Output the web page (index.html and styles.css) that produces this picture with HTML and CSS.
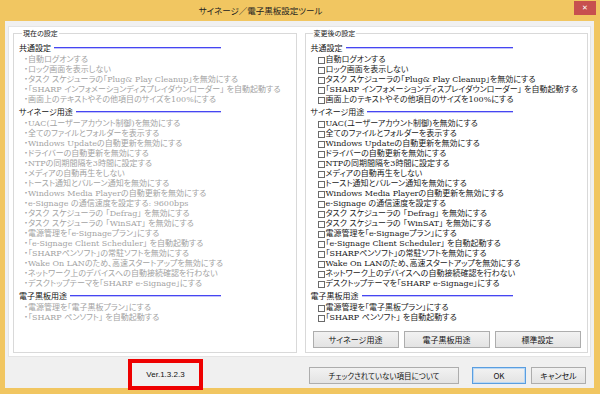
FILE: index.html
```html
<!DOCTYPE html>
<html lang="ja">
<head>
<meta charset="utf-8">
<title>サイネージ／電子黒板設定ツール</title>
<link rel="stylesheet" href="styles.css">
</head>
<body>
<div class="window">
  <div class="titlebar">
    <div class="title">サイネージ／電子黒板設定ツール</div>
    <div class="close">✕</div>
  </div>
  <div class="client">
    <div class="panel">
      <fieldset class="group current">
        <legend>現在の設定</legend>
        <div class="sec"><span>共通設定</span><i></i></div>
        <ul class="items">
          <li>・自動ログオンする</li>
          <li>・ロック画面を表示しない</li>
          <li>・タスク スケジューラの「Plug&amp; Play Cleanup」を無効にする</li>
          <li>・「SHARP インフォメーションディスプレイダウンローダー」 を自動起動する</li>
          <li>・画面上のテキストやその他項目のサイズを100%にする</li>
        </ul>
        <div class="sec"><span>サイネージ用途</span><i></i></div>
        <ul class="items">
          <li>・UAC(ユーザーアカウント制御)を無効にする</li>
          <li>・全てのファイルとフォルダーを表示する</li>
          <li>・Windows Updateの自動更新を無効にする</li>
          <li>・ドライバーの自動更新を無効にする</li>
          <li>・NTPの同期間隔を3時間に設定する</li>
          <li>・メディアの自動再生をしない</li>
          <li>・トースト通知とバルーン通知を無効にする</li>
          <li>・Windows Media Playerの自動更新を無効にする</li>
          <li>・e-Signage の通信速度を設定する: 9600bps</li>
          <li>・タスク スケジューラの 「Defrag」 を無効にする</li>
          <li>・タスク スケジューラの 「WinSAT」 を無効にする</li>
          <li>・電源管理を「e-Signageプラン」にする</li>
          <li>・「e-Signage Client Scheduler」 を自動起動する</li>
          <li>・「SHARPペンソフト」の常駐ソフトを無効にする</li>
          <li>・Wake On LANのため、高速スタートアップを無効にする</li>
          <li>・ネットワーク上のデバイスへの自動接続確認を行わない</li>
          <li>・デスクトップテーマを「SHARP e-Signage」にする</li>
        </ul>
        <div class="sec"><span>電子黒板用途</span><i></i></div>
        <ul class="items">
          <li>・電源管理を「電子黒板プラン」にする</li>
          <li>・「SHARP ペンソフト」 を自動起動する</li>
        </ul>
      </fieldset>
      <fieldset class="group after">
        <legend>変更後の設定</legend>
        <div class="sec"><span>共通設定</span><i></i></div>
        <ul class="items">
          <li><b></b>自動ログオンする</li>
          <li><b></b>ロック画面を表示しない</li>
          <li><b></b>タスク スケジューラの「Plug&amp; Play Cleanup」を無効にする</li>
          <li><b></b>「SHARP インフォメーションディスプレイダウンローダー」 を自動起動する</li>
          <li><b></b>画面上のテキストやその他項目のサイズを100%にする</li>
        </ul>
        <div class="sec"><span>サイネージ用途</span><i></i></div>
        <ul class="items">
          <li><b></b>UAC(ユーザーアカウント制御)を無効にする</li>
          <li><b></b>全てのファイルとフォルダーを表示する</li>
          <li><b></b>Windows Updateの自動更新を無効にする</li>
          <li><b></b>ドライバーの自動更新を無効にする</li>
          <li><b></b>NTPの同期間隔を3時間に設定する</li>
          <li><b></b>メディアの自動再生をしない</li>
          <li><b></b>トースト通知とバルーン通知を無効にする</li>
          <li><b></b>Windows Media Playerの自動更新を無効にする</li>
          <li><b></b>e-Signage の通信速度を設定する</li>
          <li><b></b>タスク スケジューラの 「Defrag」 を無効にする</li>
          <li><b></b>タスク スケジューラの 「WinSAT」 を無効にする</li>
          <li><b></b>電源管理を「e-Signageプラン」にする</li>
          <li><b></b>「e-Signage Client Scheduler」 を自動起動する</li>
          <li><b></b>「SHARPペンソフト」の常駐ソフトを無効にする</li>
          <li><b></b>Wake On LANのため、高速スタートアップを無効にする</li>
          <li><b></b>ネットワーク上のデバイスへの自動接続確認を行わない</li>
          <li><b></b>デスクトップテーマを「SHARP e-Signage」にする</li>
        </ul>
        <div class="sec"><span>電子黒板用途</span><i></i></div>
        <ul class="items">
          <li><b></b>電源管理を「電子黒板プラン」にする</li>
          <li><b></b>「SHARP ペンソフト」 を自動起動する</li>
        </ul>
        <div class="presets">
          <button class="btn">サイネージ用途</button>
          <button class="btn">電子黒板用途</button>
          <button class="btn">標準設定</button>
        </div>
      </fieldset>
    </div>
    <div class="footer">
      <div class="ver">Ver.1.3.2.3</div>
      <button class="btn check">チェックされていない項目について</button>
      <button class="btn ok">OK</button>
      <button class="btn cancel">キャンセル</button>
    </div>
  </div>
</div>
</body>
</html>
```

FILE: styles.css
```css
html, body {
  margin: 0;
  padding: 0;
}
body {
  width: 600px;
  height: 394px;
  overflow: hidden;
  background: #f1c661;
  font-family: "Noto Sans CJK JP", sans-serif;
}
.window {
  box-sizing: border-box;
  height: 394px;
  padding: 0 6px 6px 5px;
  display: flex;
  flex-direction: column;
}
.titlebar {
  height: 21px;
  display: flex;
  align-items: flex-start;
}
.title {
  flex: 1;
  text-align: center;
  padding-right: 58px;
  font-size: 8.5px;
  font-feature-settings: "palt";
  line-height: 21px;
  color: #222;
}
.close {
  width: 22px;
  height: 14px;
  margin-top: 1px;
  margin-right: -2px;
  background: #c7504f;
  color: #fff;
  font-family: "DejaVu Sans", sans-serif;
  font-size: 7px;
  font-weight: bold;
  line-height: 14px;
  text-align: center;
}
.client {
  flex: 1;
  background: #f0f0f0;
  padding: 5px 3px 0 3px;
  display: flex;
  flex-direction: column;
}
.panel {
  height: 331px;
  box-sizing: border-box;
  background: #fff;
  border: 1px solid #e4e4e4;
  padding: 0 2px 3px 4px;
  display: flex;
  gap: 8px;
}
.group {
  flex: 1;
  margin: 0;
  min-width: 0;
  border: 1px solid #d9d9d9;
  padding: 2px 6px 0 5px;
}
.group legend {
  font-size: 7px;
  font-feature-settings: "palt";
  line-height: 12px;
  padding: 0 1px;
  margin-left: 3px;
  color: #222;
}
.after legend {
  margin-left: 2px;
}
.sec {
  display: flex;
  align-items: center;
  height: 12px;
  width: 202px;
  margin-bottom: 2px;
  font-size: 8px;
  font-feature-settings: "palt";
  color: #111;
}
.sec span {
  white-space: nowrap;
}
.sec i {
  flex: 1;
  height: 1px;
  margin-left: 3px;
  background: #4646f2;
  box-shadow: 0 1px 0 rgba(80, 80, 240, 0.35);
}
.items {
  list-style: none;
  margin: 0;
  padding: 0;
}
.items li {
  height: 10px;
  line-height: 10px;
  font-family: "DejaVu Serif", "Noto Sans CJK JP", serif;
  font-size: 8px;
  font-feature-settings: "palt";
  white-space: nowrap;
  display: flex;
  align-items: center;
}
.current .items li {
  padding-left: 5px;
  color: #a3a3a3;
}
.after .items li {
  padding-left: 7px;
  color: #1a1a1a;
}
.after .items li b {
  flex: none;
  width: 5px;
  height: 5px;
  border: 1px solid #6a6a6a;
  margin-right: 1px;
}
.btn {
  box-sizing: border-box;
  height: 17px;
  padding: 0;
  border: 1px solid #adadad;
  background: linear-gradient(#f2f2f2, #e3e3e3);
  font-family: "Noto Sans CJK JP", sans-serif;
  font-feature-settings: "palt";
  font-size: 8px;
  color: #111;
}
.presets {
  display: grid;
  grid-template-columns: repeat(3, 1fr);
  gap: 5px;
  width: 268px;
  margin: 8px 0 0 2px;
}
.footer {
  height: 31px;
  display: flex;
  align-items: flex-start;
  padding-right: 5px;
}
.ver {
  box-sizing: border-box;
  width: 75px;
  height: 31px;
  margin: 2px 0 0 120px;
  border: 4px solid #ee0000;
  display: flex;
  align-items: center;
  justify-content: center;
  font-family: "Liberation Sans", sans-serif;
  font-size: 8px;
  color: #111;
}
.check {
  margin: 10px 0 0 auto;
  width: 150px;
  font-size: 7.5px;
}
.ok {
  margin: 10px 0 0 13px;
  width: 54px;
  border-color: #5a9ee0;
  box-shadow: inset 0 0 0 1px #b9d8f5;
}
.cancel {
  margin: 10px 0 0 5px;
  width: 55px;
}
```
